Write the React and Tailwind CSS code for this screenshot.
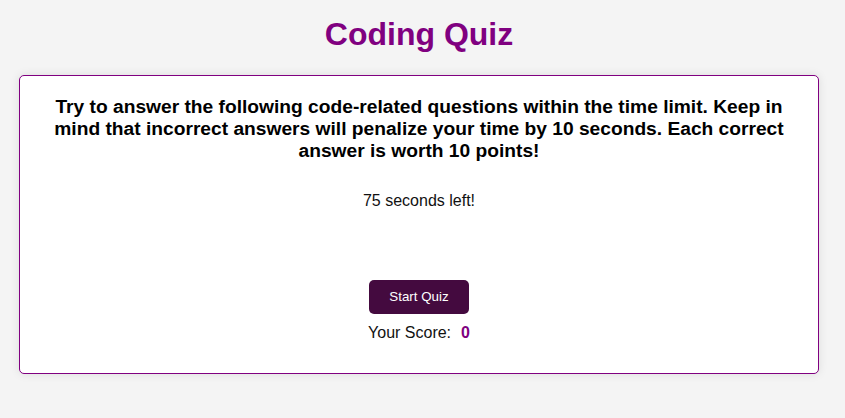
export default function App() {
  return (
    <div className="min-h-[418px] bg-[#f4f4f4] pr-[7px] font-['Liberation_Sans',Arial,sans-serif]">
      <h1 className="pt-4 text-center text-[32px] font-bold leading-[36px] text-[#800080]">
        Coding Quiz
      </h1>
      <div className="mx-auto mt-[23px] w-[800px] rounded-[5px] border border-[#800080] bg-white px-[30px] pt-[20px] pb-[28px] text-center shadow-[0_0_10px_rgba(0,0,0,0.1)]">
        <p className="text-[19.2px] font-bold leading-[22px] text-black">
          Try to answer the following code-related questions within the time
          limit. Keep in mind that incorrect answers will penalize your time by
          10 seconds. Each correct answer is worth 10 points!
        </p>
        <p className="mt-[27px] text-base leading-6 text-[#111]">75 seconds left!</p>
        <button className="mt-[67px] h-[34px] w-[100px] rounded-[5px] bg-[#440a3f] text-[13.33px] text-white">
          Start Quiz
        </button>
        <p className="mt-[7px] text-base leading-6 text-[#111]">
          Your Score:
          <span className="ml-[10px] font-bold text-[#800080]">0</span>
        </p>
      </div>
    </div>
  );
}
